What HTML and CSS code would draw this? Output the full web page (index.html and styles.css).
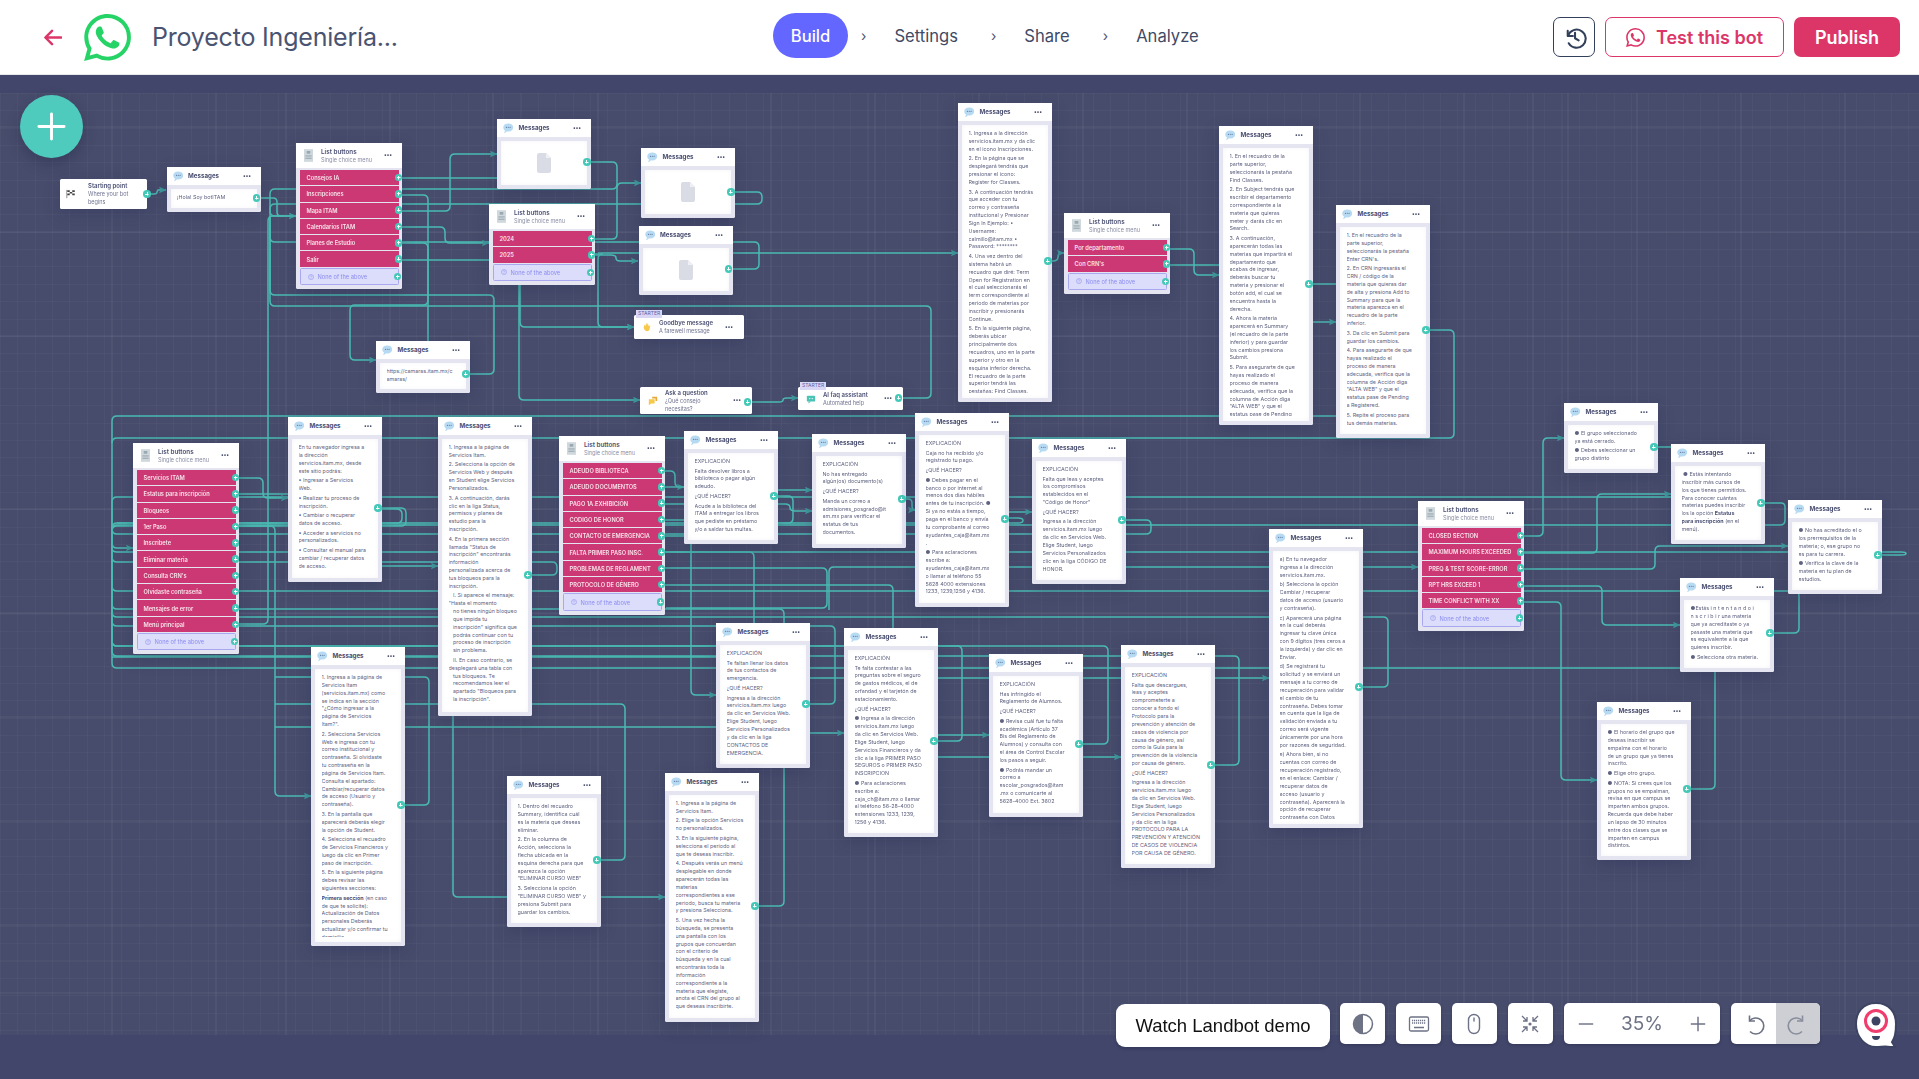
FILE: index.html
```html
<!DOCTYPE html>
<html lang="es">
<head>
<meta charset="utf-8">
<title>Proyecto Ingeniería</title>
<link rel="stylesheet" href="styles.css">
</head>
<body>
<svg class="sprite" width="0" height="0" aria-hidden="true">
  <defs>
    <symbol id="bubble" viewBox="0 0 20 20"><path d="M10 1c5.500 0 9.500 3 9.500 7.500S15.500 16 10.500 16c-1 0-2-.1-3-.4C6 17.500 4 19 2 19c1-1 1.700-3 1.500-5C1.500 12.500.5 10.500.5 8.500.5 4 4.500 1 10 1z" fill="#b7daf3"/><circle cx="6.500" cy="8" r="1" fill="#4a5b86"/><circle cx="10" cy="8" r="1" fill="#4a5b86"/><circle cx="13.500" cy="8" r="1" fill="#4a5b86"/></symbol>
    <symbol id="dots" viewBox="0 0 24 6"><circle cx="4" cy="3" r="2.600" fill="#3e4462"/><circle cx="12" cy="3" r="2.600" fill="#3e4462"/><circle cx="20" cy="3" r="2.600" fill="#3e4462"/></symbol>
    <symbol id="file" viewBox="0 0 14 20"><path d="M2 0h7l5 5v13a2 2 0 0 1-2 2H2a2 2 0 0 1-2-2V2a2 2 0 0 1 2-2z" fill="#d9dce5"/><path d="M9 0l5 5H9z" fill="#eef0f4"/></symbol>
    <symbol id="listdoc" viewBox="0 0 10 14"><rect width="10" height="14" fill="#cfd8dc"/><rect x="3" y="2" width="4" height="3" fill="#9aa9b0"/><rect x="1.500" y="7" width="7" height="1" fill="#8e9da5"/><rect x="1.500" y="9.500" width="7" height="1" fill="#8e9da5"/></symbol>
    <symbol id="help" viewBox="0 0 12 12"><circle cx="6" cy="6" r="5" fill="none" stroke="#8486ee" stroke-width="1"/><path d="M4.500 4.800c0-2 3-2 3 0 0 1.200-1.500 1-1.500 2.400" fill="none" stroke="#8486ee" stroke-width=".9"/><circle cx="6" cy="9" r=".6" fill="#8486ee"/></symbol>
    <symbol id="wa" viewBox="0 0 24 24"><path d="M17.472 14.382c-.297-.149-1.758-.867-2.030-.967-.273-.099-.471-.148-.67.150-.197.297-.767.966-.94 1.164-.173.199-.347.223-.644.075-.297-.150-1.255-.463-2.390-1.475-.883-.788-1.480-1.761-1.653-2.059-.173-.297-.018-.458.130-.606.134-.133.298-.347.446-.520.149-.174.198-.298.298-.497.099-.198.050-.371-.025-.520-.075-.149-.669-1.612-.916-2.207-.242-.579-.487-.500-.669-.510-.173-.008-.371-.010-.570-.010-.198 0-.520.074-.792.372-.272.297-1.040 1.016-1.040 2.479 0 1.462 1.065 2.875 1.213 3.074.149.198 2.096 3.200 5.077 4.487.709.306 1.262.489 1.694.625.712.227 1.360.195 1.871.118.571-.085 1.758-.719 2.006-1.413.248-.694.248-1.289.173-1.413-.074-.124-.272-.198-.570-.347m-5.421 7.403h-.004a9.870 9.870 0 0 1-5.031-1.378l-.361-.214-3.741.982.998-3.648-.235-.374a9.860 9.860 0 0 1-1.510-5.260c.001-5.450 4.436-9.884 9.888-9.884 2.640 0 5.122 1.030 6.988 2.898a9.825 9.825 0 0 1 2.893 6.994c-.003 5.450-4.437 9.884-9.885 9.884m8.413-18.297A11.815 11.815 0 0 0 12.050 0C5.495 0 .16 5.335.157 11.892c0 2.096.547 4.142 1.588 5.945L.057 24l6.305-1.654a11.882 11.882 0 0 0 5.683 1.448h.005c6.554 0 11.890-5.335 11.893-11.893a11.821 11.821 0 0 0-3.480-8.413z"/></symbol>
    <marker id="arrowhead" viewBox="0 0 8 8" refX="7.500" refY="4" markerWidth="5" markerHeight="5" orient="auto"><path d="M0 .5L8 4 0 7.500 1.500 4z" fill="#3f9d9e"/></marker>
  </defs>
</svg>

<div class="app">
  <header class="topbar">
    <div class="brand">
      <svg class="back" viewBox="0 0 20 20"><path d="M19 10H3M9.500 3L2.500 10l7 7" fill="none" stroke="#dc3669" stroke-width="2.600" stroke-linecap="round" stroke-linejoin="round"/></svg>
      <svg class="wa-logo"><use href="#wa"/></svg>
      <h1 class="bot-name">Proyecto Ingeniería...</h1>
    </div>
    <nav class="steps">
      <a class="step current">Build</a>
      <span class="chev first">›</span>
      <a class="step">Settings</a>
      <span class="chev">›</span>
      <a class="step">Share</a>
      <span class="chev">›</span>
      <a class="step">Analyze</a>
    </nav>
    <div class="actions">
      <button class="btn-history"><svg viewBox="0 0 24 24"><path d="M5.500 5.500v5h5" fill="none" stroke="#33405c" stroke-width="2" stroke-linecap="round" stroke-linejoin="round"/><path d="M5.800 10.300A8.700 8.700 0 1 1 6.500 17.500" fill="none" stroke="#33405c" stroke-width="2" stroke-linecap="round"/><path d="M12.500 7.500v5.200l3.500 2" fill="none" stroke="#33405c" stroke-width="2" stroke-linecap="round" stroke-linejoin="round"/></svg></button>
      <button class="btn-test"><svg><use href="#wa"/></svg>Test this bot</button>
      <button class="btn-publish">Publish</button>
    </div>
  </header>

  <main class="canvas">
    <div class="grid"></div>
    <div class="board">
      <svg class="wires" width="1919" height="1079" viewBox="0 0 1919 1079">
        <path class="major" d="M112 93V1035M216 93V1035M286 93V1035M390 93V1035M493 93V1035M598 93V1035M771 93V1035M875 93V1035M979 93V1035M1083 93V1035M1187 93V1035M1360 93V1035M1464 93V1035M1533 93V1035M1568 93V1035M1637 93V1035M1741 93V1035M1845 93V1035M0 127H1919M0 232H1919M0 336H1919M0 509H1919M0 613H1919M0 717H1919M0 821H1919M0 925H1919M0 993H1919"/>
        <path class="wire arrow" d="M147 194H154Q157 194 157 192L158 190H166"/>
        <path class="wire arrow" d="M256 198H273Q277 198 277 202V212Q277 216 281 216H296"/>
        <path class="wire arrow" d="M591 162H612Q617 162 617 167V184Q617 189 612 189H275Q270 189 270 194V211Q270 216 275 216H296"/>
        <path class="wire" d="M731 192H757Q762 192 762 197V199Q762 204 757 204H275Q270 204 270 209V216"/>
        <path class="wire" d="M731 269H754Q759 269 759 264V247Q759 242 754 242H275Q270 242 270 237V216"/>
        <path class="wire" d="M903 398H926Q931 398 931 393V311Q931 306 926 306H275Q270 306 270 301V216"/>
        <path class="wire" d="M466 374H489Q494 374 494 369V300Q494 295 489 295H275Q270 295 270 290V216"/>
        <path class="wire" d="M235 624H263Q268 624 268 619V221Q268 216 273 216H296"/>
        <path class="wire arrow" d="M235 526H270Q275 526 275 531V791Q275 796 280 796H311"/>
        <path class="wire arrow" d="M398 195H423Q428 195 428 200V300Q428 305 423 305H355Q350 305 350 310V355Q350 360 355 360H376"/>
        <path class="wire" d="M398 243H423Q428 243 428 248V345"/>
        <path class="wire" d="M398 178H497"/>
        <path class="wire arrow" d="M398 211H445Q450 211 450 206V159Q450 154 455 154H497"/>
        <path class="wire arrow" d="M398 227H440Q445 227 445 232V238Q445 243 450 243H489"/>
        <path class="wire" d="M398 260H489"/>
        <path class="wire arrow" d="M590 239H612Q617 239 617 234V188Q617 183 622 183H641"/>
        <path class="wire arrow" d="M590 255H611Q616 255 616 258Q616 261 620 261H638"/>
        <path class="wire arrow" d="M590 254H603Q598 254 598 259V322Q598 327 603 327H634"/>
        <path class="wire arrow" d="M520 284V322Q520 327 525 327H634"/>
        <path class="wire arrow" d="M519 284V395Q519 400 524 400H640"/>
        <path class="wire arrow" d="M598 253H958"/>
        <path class="wire arrow" d="M1047 261H1053Q1058 261 1058 257L1059 253H1064"/>
        <path class="wire arrow" d="M1165 249H1189Q1194 249 1194 254V270Q1194 275 1199 275H1219"/>
        <path class="wire" d="M1165 265H1219"/>
        <path class="wire" d="M1308 284H1336"/>
        <path class="wire arrow" d="M1313 322H1336"/>
        <path class="wire arrow" d="M1429 330H1449Q1454 330 1454 335V433Q1454 438 1449 438H117Q112 438 112 443V543Q112 548 117 548H133"/>
        <path class="wire" d="M1336 416H117Q112 416 112 421V443"/>
        <path class="wire arrow" d="M748 402H779Q783 402 783 400Q783 398 787 398H798"/>
        <path class="wire" d="M1653 447H1675Q1680 447 1680 452V492Q1680 497 1675 497H117Q112 497 112 502V548"/>
        <path class="wire" d="M1760 503H1781Q1785 503 1785 507V520Q1785 525 1780 525H117Q112 525 112 530V548"/>
        <path class="wire" d="M1876 555H1901Q1906 555 1906 553.500Q1906 552 1901 552H117Q112 552 112 548"/>
        <path class="wire" d="M1769 633H1794Q1799 633 1799 628V596Q1799 591 1794 591H117Q112 591 112 586V548"/>
        <path class="wire" d="M1686 789H1710Q1715 789 1715 784V673Q1715 668 1710 668H117Q112 668 112 663V548"/>
        <path class="wire" d="M1358 687H1383Q1388 687 1388 682V622Q1388 617 1383 617H117Q112 617 112 612V548"/>
        <path class="wire" d="M1210 765H1234Q1239 765 1239 760V661Q1239 656 1234 656H117Q112 656 112 651V548"/>
        <path class="wire" d="M1078 744H1103Q1108 744 1108 739V651Q1108 646 1103 646H117Q112 646 112 641V548"/>
        <path class="wire" d="M932 741H957Q962 741 962 736V651Q962 646 957 646H117Q112 646 112 641V548"/>
        <path class="wire" d="M1121 520H1146Q1151 520 1151 525V529Q1151 534 1146 534H117Q112 534 112 529V548"/>
        <path class="wire" d="M804 704H830Q835 704 835 699V631Q835 626 830 626H117Q112 626 112 621V548"/>
        <path class="wire" d="M595 860H620Q625 860 625 855V709Q625 704 620 704H275"/>
        <path class="wire" d="M400 805H424Q429 805 429 800V682Q429 677 424 677H275"/>
        <path class="wire" d="M528 575H552Q557 575 557 570V567Q557 562 552 562H117Q112 562 112 557V548"/>
        <path class="wire" d="M377 508H401Q406 508 406 513V521Q406 526 401 526H117Q112 526 112 531V548"/>
        <path class="wire" d="M377 509H396Q402 509 402 514V518Q402 523 397 523H117Q112 523 112 528V548"/>
        <path class="wire" d="M755 906H779Q784 906 784 901V614Q784 609 779 609H117Q112 609 112 604V548"/>
        <path class="wire" d="M1005 518H1018Q1023 518 1023 520.500Q1023 523 1018 523H117"/>
        <path class="wire arrow" d="M901 499H908Q912 499 912 503V506Q912 510 915 510"/>
        <path class="wire arrow" d="M1009 512H1032"/>
        <path class="wire" d="M773 496H788Q793 496 793 501V518Q793 523 788 523H778"/>
        <path class="wire arrow" d="M661 504H785Q790 504 790 507.500Q790 511 795 511H812"/>
        <path class="wire arrow" d="M661 471H670Q675 471 675 476V482Q675 487 680 487H684"/>
        <path class="wire arrow" d="M661 487H686Q691 487 691 492V690Q691 695 696 695H716"/>
        <path class="wire arrow" d="M778 490H812"/>
        <path class="wire" d="M661 520H684"/>
        <path class="wire" d="M661 536H684"/>
        <path class="wire arrow" d="M661 552H749Q754 552 754 557V728Q754 733 759 733H844"/>
        <path class="wire" d="M661 568H822Q827 568 827 573V603Q827 608 822 608H666"/>
        <path class="wire arrow" d="M829 610V572Q829 567 834 567H1418"/>
        <path class="wire arrow" d="M661 585H888Q893 585 893 590V730Q893 735 898 735H989"/>
        <path class="wire arrow" d="M937 757H1121"/>
        <path class="wire arrow" d="M809 678H1269"/>
        <path class="wire arrow" d="M382 566H438"/>
        <path class="wire" d="M235 494H288"/>
        <path class="wire arrow" d="M235 478H258Q263 478 263 483V493Q263 498 268 498H288"/>
        <path class="wire arrow" d="M1520 536H1538Q1543 536 1543 531V443Q1543 438 1548 438H1564"/>
        <path class="wire arrow" d="M1520 553H1592Q1597 553 1597 548V499Q1597 494 1602 494H1671"/>
        <path class="wire arrow" d="M1520 569H1650Q1655 569 1655 564V551Q1655 546 1660 546H1788"/>
        <path class="wire arrow" d="M1520 586H1597Q1602 586 1602 591V620Q1602 625 1607 625H1680"/>
        <path class="wire arrow" d="M1520 602H1556Q1561 602 1561 607V775Q1561 780 1566 780H1597"/>
        <path class="wire arrow" d="M453 716V892Q453 897 458 897H665"/>
        <path class="wire" d="M112 657H716"/>
        <path class="wire" d="M275 727H716"/>
      </svg>

      <article class="node start" style="left:60px;top:179px;width:87px;height:30px">
        <svg class="flag" viewBox="0 0 12 12"><path d="M1 1v10" stroke="#555" stroke-width=".8"/><path d="M1.500 1.500h9v6h-9z" fill="#fff"/><path d="M1.500 1.500h3v2h-3zM7.500 1.500h3v2h-3zM4.500 3.500h3v2h-3zM1.500 5.500h3v2h-3zM7.500 5.500h3v2h-3z" fill="#444"/></svg>
        <div class="start-text"><b>Starting point</b><span>Where your bot<br>begins</span></div>
        <i class="port out-edge" style="top:15px"></i>
      </article>

      <article class="node msg" style="left:166.500px;top:167px;width:94px;height:45px">
        <header class="head"><svg class="bubble"><use href="#bubble"/></svg><b>Messages</b><svg class="dots"><use href="#dots"/></svg></header>
        <div class="body"><div class="text"><p>¡Hola! Soy botITAM</p></div></div>
        <i class="port" style="top:31px"></i>
      </article>

      <article class="node list" style="left:296px;top:143px;width:106px">
        <header class="list-head"><svg class="doc"><use href="#listdoc"/></svg><div class="list-title"><b>List buttons</b><span>Single choice menu</span></div><svg class="dots"><use href="#dots"/></svg></header>
        <div class="rows">
          <div class="row">Consejos IA<i class="port"></i></div>
          <div class="row">Inscripciones<i class="port"></i></div>
          <div class="row">Mapa ITAM<i class="port"></i></div>
          <div class="row">Calendarios ITAM<i class="port"></i></div>
          <div class="row">Planes de Estudio<i class="port"></i></div>
          <div class="row">Salir<i class="port"></i></div>
          <div class="row none"><svg class="help"><use href="#help"/></svg>None of the above<i class="port"></i></div>
        </div>
      </article>

      <article class="node msg" style="left:497px;top:119px;width:94px;height:70px">
        <header class="head"><svg class="bubble"><use href="#bubble"/></svg><b>Messages</b><svg class="dots"><use href="#dots"/></svg></header>
        <div class="body media"><svg class="file"><use href="#file"/></svg></div>
        <i class="port" style="top:43px"></i>
      </article>

      <article class="node list" style="left:489px;top:204px;width:106px">
        <header class="list-head"><svg class="doc"><use href="#listdoc"/></svg><div class="list-title"><b>List buttons</b><span>Single choice menu</span></div><svg class="dots"><use href="#dots"/></svg></header>
        <div class="rows">
          <div class="row">2024<i class="port"></i></div>
          <div class="row">2025<i class="port"></i></div>
          <div class="row none"><svg class="help"><use href="#help"/></svg>None of the above<i class="port"></i></div>
        </div>
      </article>

      <article class="node msg" style="left:641px;top:148px;width:94px;height:70px">
        <header class="head"><svg class="bubble"><use href="#bubble"/></svg><b>Messages</b><svg class="dots"><use href="#dots"/></svg></header>
        <div class="body media"><svg class="file"><use href="#file"/></svg></div>
        <i class="port" style="top:44px"></i>
      </article>

      <article class="node msg" style="left:638.500px;top:226px;width:94px;height:69px">
        <header class="head"><svg class="bubble"><use href="#bubble"/></svg><b>Messages</b><svg class="dots"><use href="#dots"/></svg></header>
        <div class="body media"><svg class="file"><use href="#file"/></svg></div>
        <i class="port" style="top:43px"></i>
      </article>

      <article class="node starter" style="left:634px;top:315px;width:110px;height:24px">
        <span class="starter-tag">STARTER</span>
        <svg class="emoji" viewBox="0 0 12 12"><path d="M2 7l1-4 1 2 1-4 1 3 1-3 1 4 2-1-1 5c-1 3-6 3-7-2z" fill="#f7c84a"/></svg>
        <div class="start-text"><b>Goodbye message</b><span>A farewell message</span></div>
        <svg class="dots"><use href="#dots"/></svg>
      </article>

      <article class="node starter plain" style="left:640px;top:387px;width:112px;height:27px">
        <svg class="emoji" viewBox="0 0 12 12"><path d="M1 4h7v5H4l-3 2z" fill="#f7c84a"/><path d="M5 1h6v5H9V3H5z" fill="#e8a93a"/></svg>
        <div class="start-text"><b>Ask a question</b><span>¿Qué consejo<br>necesitas?</span></div>
        <svg class="dots"><use href="#dots"/></svg>
        <i class="port" style="top:15px"></i>
      </article>

      <article class="node starter" style="left:798px;top:387px;width:105px;height:23px">
        <span class="starter-tag">STARTER</span>
        <svg class="emoji" viewBox="0 0 12 12"><rect x="1" y="2" width="10" height="7" rx="1" fill="#4cc3b4"/><path d="M3 9l0 2.500L6 9z" fill="#4cc3b4"/><circle cx="4.500" cy="5.500" r=".8" fill="#fff"/><circle cx="7.500" cy="5.500" r=".8" fill="#fff"/></svg>
        <div class="start-text"><b>AI faq assistant</b><span>Automated help</span></div>
        <svg class="dots"><use href="#dots"/></svg>
        <i class="port" style="top:11px"></i>
      </article>

      <article class="node msg" style="left:958px;top:103px;width:94px;height:299px">
        <header class="head"><svg class="bubble"><use href="#bubble"/></svg><b>Messages</b><svg class="dots"><use href="#dots"/></svg></header>
        <div class="body"><div class="text">
          <p>1. Ingresa a la dirección<br>servicios.itam.mx y da clic<br>en el icono Inscripciones.</p>
          <p>2. En la página que se<br>desplegará tendrás que<br>presionar el icono:<br>Register for Classes.</p>
          <p>3. A continuación tendrás<br>que acceder con tu<br>correo y contraseña<br>institucional y Presionar<br>Sign In Ejemplo: •<br>Username:<br>calmillo@itam.mx •<br>Password: ********</p>
          <p>4. Una vez dentro del<br>sistema habrá un<br>recuadro que diré: Term<br>Open for Registration en<br>el cual seleccionarás el<br>term correspondiente al<br>periodo de materias por<br>inscribir y presionarás<br>Continue.</p>
          <p>5. En la siguiente página,<br>deberás ubicar<br>principalmente dos<br>recuadros, uno en la parte<br>superior y otro en la<br>esquina inferior derecha.<br>El recuadro de la parte<br>superior tendrá las<br>pestañas: Find Classes,</p>
        </div></div>
        <i class="port" style="top:158px"></i>
      </article>

      <article class="node list" style="left:1064px;top:213px;width:106px">
        <header class="list-head"><svg class="doc"><use href="#listdoc"/></svg><div class="list-title"><b>List buttons</b><span>Single choice menu</span></div><svg class="dots"><use href="#dots"/></svg></header>
        <div class="rows">
          <div class="row">Por departamento<i class="port"></i></div>
          <div class="row">Con CRN's<i class="port"></i></div>
          <div class="row none"><svg class="help"><use href="#help"/></svg>None of the above<i class="port"></i></div>
        </div>
      </article>

      <article class="node msg" style="left:1219px;top:126px;width:94px;height:299px">
        <header class="head"><svg class="bubble"><use href="#bubble"/></svg><b>Messages</b><svg class="dots"><use href="#dots"/></svg></header>
        <div class="body"><div class="text">
          <p>1. En el recuadro de la<br>parte superior,<br>seleccionarás la pestaña<br>Find Classes.</p>
          <p>2. En Subject tendrás que<br>escribir el departamento<br>correspondiente a la<br>materia que quieras<br>meter y darás clic en<br>Search.</p>
          <p>3. A continuación,<br>aparecerán todas las<br>materias que impartirá el<br>departamento que<br>acabas de ingresar,<br>deberás buscar tu<br>materia y presionar el<br>botón add, el cual se<br>encuentra hasta la<br>derecha.</p>
          <p>4. Ahora la materia<br>aparecerá en Summary<br>(el recuadro de la parte<br>inferior) y para guardar<br>los cambios presiona<br>Submit.</p>
          <p>5. Para asegurarte de que<br>hayas realizado el<br>proceso de manera<br>adecuada, verifica que la<br>columna de Acción diga<br>"ALTA WEB" y que el<br>estatus pase de Pending</p>
        </div></div>
        <i class="port" style="top:158px"></i>
      </article>

      <article class="node msg" style="left:1336px;top:205px;width:94px;height:233px">
        <header class="head"><svg class="bubble"><use href="#bubble"/></svg><b>Messages</b><svg class="dots"><use href="#dots"/></svg></header>
        <div class="body"><div class="text">
          <p>1. En el recuadro de la<br>parte superior,<br>seleccionarás la pestaña<br>Enter CRN's.</p>
          <p>2. En CRN ingresarás el<br>CRN / código de la<br>materia que quieras dar<br>de alta y presiona Add to<br>Summary para que la<br>materia aparezca en el<br>recuadro de la parte<br>inferior.</p>
          <p>3. Da clic en Submit para<br>guardar los cambios.</p>
          <p>4. Para asegurarte de que<br>hayas realizado el<br>proceso de manera<br>adecuada, verifica que la<br>columna de Acción diga<br>"ALTA WEB" y que el<br>estatus pase de Pending<br>a Registered.</p>
          <p>5. Repite el proceso para<br>tus demás materias.</p>
        </div></div>
        <i class="port" style="top:125px"></i>
      </article>

      <article class="node msg" style="left:376px;top:341px;width:94px;height:52px">
        <header class="head"><svg class="bubble"><use href="#bubble"/></svg><b>Messages</b><svg class="dots"><use href="#dots"/></svg></header>
        <div class="body"><div class="text"><p>https://camaras.itam.mx/c<br>amaras/</p></div></div>
        <i class="port" style="top:33px"></i>
      </article>

      <article class="node list" style="left:133px;top:443px;width:106px">
        <header class="list-head"><svg class="doc"><use href="#listdoc"/></svg><div class="list-title"><b>List buttons</b><span>Single choice menu</span></div><svg class="dots"><use href="#dots"/></svg></header>
        <div class="rows">
          <div class="row">Servicios ITAM<i class="port"></i></div>
          <div class="row">Estatus para inscripción<i class="port"></i></div>
          <div class="row">Bloqueos<i class="port"></i></div>
          <div class="row">1er Paso<i class="port"></i></div>
          <div class="row">Inscríbete<i class="port"></i></div>
          <div class="row">Eliminar materia<i class="port"></i></div>
          <div class="row">Consulta CRN's<i class="port"></i></div>
          <div class="row">Olvidaste contraseña<i class="port"></i></div>
          <div class="row">Mensajes de error<i class="port"></i></div>
          <div class="row">Menú principal<i class="port"></i></div>
          <div class="row none"><svg class="help"><use href="#help"/></svg>None of the above<i class="port"></i></div>
        </div>
      </article>

      <article class="node msg" style="left:288px;top:417px;width:94px;height:165px">
        <header class="head"><svg class="bubble"><use href="#bubble"/></svg><b>Messages</b><svg class="dots"><use href="#dots"/></svg></header>
        <div class="body"><div class="text">
          <p>En tu navegador ingresa a<br>la dirección<br>servicios.itam.mx, desde<br>este sitio podrás:</p>
          <p>• Ingresar a Servicios<br>Web.</p>
          <p>• Realizar tu proceso de<br>inscripción.</p>
          <p>• Cambiar o recuperar<br>datos de acceso.</p>
          <p>• Acceder a servicios no<br>personalizados.</p>
          <p>• Consultar el manual para<br>cambiar / recuperar datos<br>de acceso.</p>
        </div></div>
        <i class="port" style="top:91px"></i>
      </article>

      <article class="node msg" style="left:438px;top:417px;width:94px;height:299px">
        <header class="head"><svg class="bubble"><use href="#bubble"/></svg><b>Messages</b><svg class="dots"><use href="#dots"/></svg></header>
        <div class="body"><div class="text">
          <p>1. Ingresa a la página de<br>Servicios Itam.</p>
          <p>2. Selecciona la opción de<br>Servicios Web y después<br>en Student elige Servicios<br>Personalizados.</p>
          <p>3. A continuación, darás<br>clic en la liga Status,<br>permisos y planes de<br>estudio para la<br>inscripción.</p>
          <p>4. En la primera sección<br>llamada "Status de<br>inscripción" encontrarás<br>información<br>personalizada acerca de<br>tus bloqueos para la<br>inscripción.</p>
          <p class="indent">I. Si aparece el mensaje:<br><span class="out">"Hasta el momento<br>no tienes ningún bloqueo<br>que impida tu<br>inscripción" significa que<br>podrás continuar con tu<br>proceso de inscripción<br>sin problema.</span></p>
          <p class="indent">II. En caso contrario, se<br><span class="out">desplegará una tabla con<br>tus bloqueos. Te<br>recomendamos leer el<br>apartado "Bloqueos para<br>la inscripción".</span></p>
        </div></div>
        <i class="port" style="top:158px"></i>
      </article>

      <article class="node msg" style="left:311px;top:647px;width:94px;height:299px">
        <header class="head"><svg class="bubble"><use href="#bubble"/></svg><b>Messages</b><svg class="dots"><use href="#dots"/></svg></header>
        <div class="body"><div class="text">
          <p>1. Ingresa a la página de<br>Servicios Itam<br>(servicios.itam.mx) como<br>se indica en la sección<br>"¿Cómo ingresar a la<br>página de Servicios<br>Itam?".</p>
          <p>2. Selecciona Servicios<br>Web e ingresa con tu<br>correo institucional y<br>contraseña. Si olvidaste<br>tu contraseña en la<br>página de Servicios Itam.<br>Consulta el apartado:<br>Cambiar/recuperar datos<br>de acceso (Usuario y<br>contraseña).</p>
          <p>3. En la pantalla que<br>aparecerá deberás elegir<br>la opción de Student.</p>
          <p>4. Selecciona el recuadro<br>de Servicios Financieros y<br>luego da clic en Primer<br>paso de inscripción.</p>
          <p>5. En la siguiente página<br>debes revisar las<br>siguientes secciones:</p>
          <p><b>Primera sección</b> (en caso<br>de que te solicite):<br>Actualización de Datos<br>personales Deberás<br>actualizar y/o confirmar tu<br>domicilio.</p>
        </div></div>
        <i class="port" style="top:158px"></i>
      </article>

      <article class="node list" style="left:559px;top:436px;width:106px">
        <header class="list-head"><svg class="doc"><use href="#listdoc"/></svg><div class="list-title"><b>List buttons</b><span>Single choice menu</span></div><svg class="dots"><use href="#dots"/></svg></header>
        <div class="rows">
          <div class="row">ADEUDO BIBLIOTECA<i class="port"></i></div>
          <div class="row">ADEUDO DOCUMENTOS<i class="port"></i></div>
          <div class="row">PAGO 1A.EXHIBICIÓN<i class="port"></i></div>
          <div class="row">CODIGO DE HONOR<i class="port"></i></div>
          <div class="row">CONTACTO DE EMERGENCIA<i class="port"></i></div>
          <div class="row">FALTA PRIMER PASO INSC.<i class="port"></i></div>
          <div class="row">PROBLEMAS DE REGLAMENT<i class="port"></i></div>
          <div class="row">PROTOCOLO DE GÉNERO<i class="port"></i></div>
          <div class="row none"><svg class="help"><use href="#help"/></svg>None of the above<i class="port"></i></div>
        </div>
      </article>

      <article class="node msg" style="left:684px;top:431px;width:94px;height:113px">
        <header class="head"><svg class="bubble"><use href="#bubble"/></svg><b>Messages</b><svg class="dots"><use href="#dots"/></svg></header>
        <div class="body"><div class="text">
          <p>EXPLICACIÓN</p>
          <p>Falta devolver libros a<br>biblioteca o pagar algún<br>adeudo.</p>
          <p>¿QUÉ HACER?</p>
          <p>Acude a la biblioteca del<br>ITAM a entregar los libros<br>que pediste en préstamo<br>y/o a saldar tus multas.</p>
        </div></div>
        <i class="port" style="top:65px"></i>
      </article>

      <article class="node msg" style="left:812px;top:434px;width:94px;height:114px">
        <header class="head"><svg class="bubble"><use href="#bubble"/></svg><b>Messages</b><svg class="dots"><use href="#dots"/></svg></header>
        <div class="body"><div class="text">
          <p>EXPLICACIÓN</p>
          <p>No has entregado<br>algún(os) documento(s)</p>
          <p>¿QUÉ HACER?</p>
          <p>Manda un correo a<br>admisiones_posgrado@it<br>am.mx para verificar el<br>estatus de tus<br>documentos.</p>
        </div></div>
        <i class="port" style="top:65px"></i>
      </article>

      <article class="node msg" style="left:915px;top:413px;width:94px;height:194px">
        <header class="head"><svg class="bubble"><use href="#bubble"/></svg><b>Messages</b><svg class="dots"><use href="#dots"/></svg></header>
        <div class="body"><div class="text">
          <p>EXPLICACIÓN</p>
          <p>Caja no ha recibido y/o<br>registrado tu pago.</p>
          <p>¿QUÉ HACER?</p>
          <p>● Debes pagar en el<br>banco o por internet al<br>menos dos días hábiles<br>antes de tu inscripción. ●<br>Si ya no estás a tiempo,<br>paga en el banco y envía<br>tu comprobante al correo<br>ayudantes_caja@itam.mx<br>.</p>
          <p>● Para aclaraciones<br>escribe a:<br>ayudantes_caja@itam.mx<br>o llamar al teléfono 55<br>5628 4000 extensiones<br>1233, 1239,1256 y 4136.</p>
        </div></div>
        <i class="port" style="top:106px"></i>
      </article>

      <article class="node msg" style="left:716px;top:623px;width:94px;height:145px">
        <header class="head"><svg class="bubble"><use href="#bubble"/></svg><b>Messages</b><svg class="dots"><use href="#dots"/></svg></header>
        <div class="body"><div class="text">
          <p>EXPLICACIÓN</p>
          <p>Te faltan llenar los datos<br>de tus contactos de<br>emergencia.</p>
          <p>¿QUÉ HACER?</p>
          <p>Ingresa a la dirección<br>servicios.itam.mx luego<br>da clic en Servicios Web.<br>Elige Student, luego<br>Servicios Personalizados<br>y da clic en la liga<br>CONTACTOS DE<br>EMERGENCIA.</p>
        </div></div>
        <i class="port" style="top:81px"></i>
      </article>

      <article class="node msg" style="left:844px;top:628px;width:94px;height:209px">
        <header class="head"><svg class="bubble"><use href="#bubble"/></svg><b>Messages</b><svg class="dots"><use href="#dots"/></svg></header>
        <div class="body"><div class="text">
          <p>EXPLICACIÓN</p>
          <p>Te falta contestar a las<br>preguntas sobre el seguro<br>de gastos médicos, el de<br>orfandad y el tarjetón de<br>estacionamiento.</p>
          <p>¿QUÉ HACER?</p>
          <p>● Ingresa a la dirección<br>servicios.itam.mx luego<br>da clic en Servicios Web.<br>Elige Student, luego<br>Servicios Financieros y da<br>clic a la liga PRIMER PASO<br>SEGUROS o PRIMER PASO<br>INSCRIPCION</p>
          <p>● Para aclaraciones<br>escribe a:<br>caja_ch@itam.mx o llamar<br>al teléfono 56-28-4000<br>extensiones 1233, 1239,<br>1256 y 4136.</p>
        </div></div>
        <i class="port" style="top:113px"></i>
      </article>

      <article class="node msg" style="left:507px;top:776px;width:94px;height:151px">
        <header class="head"><svg class="bubble"><use href="#bubble"/></svg><b>Messages</b><svg class="dots"><use href="#dots"/></svg></header>
        <div class="body"><div class="text">
          <p>1. Dentro del recuadro<br>Summary, identifica cuál<br>es la materia que deseas<br>eliminar.</p>
          <p>2. En la columna de<br>Acción, selecciona la<br>flecha ubicada en la<br>esquina derecha para que<br>aparezca la opción<br>"ELIMINAR CURSO WEB"</p>
          <p>3. Selecciona la opción<br>"ELIMINAR CURSO WEB" y<br>presiona Submit para<br>guardar los cambios.</p>
        </div></div>
        <i class="port" style="top:84px"></i>
      </article>

      <article class="node msg" style="left:665px;top:773px;width:94px;height:249px">
        <header class="head"><svg class="bubble"><use href="#bubble"/></svg><b>Messages</b><svg class="dots"><use href="#dots"/></svg></header>
        <div class="body"><div class="text">
          <p>1. Ingresa a la página de<br>Servicios Itam.</p>
          <p>2. Elige la opción Servicios<br>no personalizados.</p>
          <p>3. En la siguiente página,<br>selecciona el periodo al<br>que te deseas inscribir.</p>
          <p>4. Después verás un menú<br>desplegable en donde<br>aparecerán todas las<br>materias<br>correspondientes a ese<br>periodo, busca tu materia<br>y presiona Selecciona.</p>
          <p>5. Una vez hecha la<br>búsqueda, se presenta<br>una pantalla con los<br>grupos que concuerdan<br>con el criterio de<br>búsqueda y en la cual<br>encontrarás toda la<br>información<br>correspondiente a la<br>materia que elegiste,<br>anota el CRN del grupo al<br>que deseas inscribirte.</p>
        </div></div>
        <i class="port" style="top:133px"></i>
      </article>

      <article class="node msg" style="left:1032px;top:439px;width:94px;height:145px">
        <header class="head"><svg class="bubble"><use href="#bubble"/></svg><b>Messages</b><svg class="dots"><use href="#dots"/></svg></header>
        <div class="body"><div class="text">
          <p>EXPLICACIÓN</p>
          <p>Falta que leas y aceptes<br>los compromisos<br>establecidos en el<br>"Código de Honor"</p>
          <p>¿QUÉ HACER?</p>
          <p>Ingresa a la dirección<br>servicios.itam.mx luego<br>da clic en Servicios Web.<br>Elige Student, luego<br>Servicios Personalizados<br>clic en la liga CÓDIGO DE<br>HONOR.</p>
        </div></div>
        <i class="port" style="top:81px"></i>
      </article>

      <article class="node msg" style="left:1269px;top:529px;width:94px;height:299px">
        <header class="head"><svg class="bubble"><use href="#bubble"/></svg><b>Messages</b><svg class="dots"><use href="#dots"/></svg></header>
        <div class="body"><div class="text">
          <p>a) En tu navegador<br>ingresa a la dirección<br>servicios.itam.mx.</p>
          <p>b) Selecciona la opción<br>Cambiar / recuperar<br>datos de acceso (usuario<br>y contraseña).</p>
          <p>c) Aparecerá una página<br>en la cual deberás<br>ingresar tu clave única<br>con 9 dígitos (tres ceros a<br>la izquierda) y dar clic en<br>Enviar.</p>
          <p>d) Se registrará tu<br>solicitud y se enviará un<br>mensaje a tu correo de<br>recuperación para validar<br>el cambio de tu<br>contraseña. Debes tomar<br>en cuenta que la liga de<br>validación enviada a tu<br>correo será vigente<br>únicamente por una hora<br>por razones de seguridad.</p>
          <p>e) Ahora bien, si no<br>cuentas con correo de<br>recuperación registrado,<br>en el enlace: Cambiar /<br>recuperar datos de<br>acceso (usuario y<br>contraseña). Aparecerá la<br>opción de recuperar<br>contraseña con Datos</p>
        </div></div>
        <i class="port" style="top:158px"></i>
      </article>

      <article class="node msg" style="left:989px;top:654px;width:94px;height:163px">
        <header class="head"><svg class="bubble"><use href="#bubble"/></svg><b>Messages</b><svg class="dots"><use href="#dots"/></svg></header>
        <div class="body"><div class="text">
          <p>EXPLICACIÓN</p>
          <p>Has infringido el<br>Reglamento de Alumnos.</p>
          <p>¿QUÉ HACER?</p>
          <p>● Revisa cuál fue tu falta<br>académica (Artículo 37<br>Bis del Reglamento de<br>Alumnos) y consulta con<br>el área de Control Escolar<br>los pasos a seguir.</p>
          <p>● Podrás mandar un<br>correo a<br>escolar_posgrados@itam<br>.mx o comunicarte al<br>5628-4000 Ext. 3602</p>
        </div></div>
        <i class="port" style="top:90px"></i>
      </article>

      <article class="node msg" style="left:1121px;top:645px;width:94px;height:223px">
        <header class="head"><svg class="bubble"><use href="#bubble"/></svg><b>Messages</b><svg class="dots"><use href="#dots"/></svg></header>
        <div class="body"><div class="text">
          <p>EXPLICACIÓN</p>
          <p>Falta que descargues,<br>leas y aceptes<br>comprometerte a<br>conocer a fondo el<br>Protocolo para la<br>prevención y atención de<br>casos de violencia por<br>causa de género, así<br>como la Guía para la<br>prevención de la violencia<br>por causa de género.</p>
          <p>¿QUÉ HACER?</p>
          <p>Ingresa a la dirección<br>servicios.itam.mx luego<br>da clic en Servicios Web.<br>Elige Student, luego<br>Servicios Personalizados<br>y da clic en la liga<br>PROTOCOLO PARA LA<br>PREVENCIÓN Y ATENCIÓN<br>DE CASOS DE VIOLENCIA<br>POR CAUSA DE GÉNERO.</p>
        </div></div>
        <i class="port" style="top:120px"></i>
      </article>

      <article class="node list" style="left:1418px;top:501px;width:106px">
        <header class="list-head"><svg class="doc"><use href="#listdoc"/></svg><div class="list-title"><b>List buttons</b><span>Single choice menu</span></div><svg class="dots"><use href="#dots"/></svg></header>
        <div class="rows">
          <div class="row">CLOSED SECTION<i class="port"></i></div>
          <div class="row">MAXIMUM HOURS EXCEEDED<i class="port"></i></div>
          <div class="row">PREQ &amp; TEST SCORE-ERROR<i class="port"></i></div>
          <div class="row">RPT HRS EXCEED 1<i class="port"></i></div>
          <div class="row">TIME CONFLICT WITH XX<i class="port"></i></div>
          <div class="row none"><svg class="help"><use href="#help"/></svg>None of the above<i class="port"></i></div>
        </div>
      </article>

      <article class="node msg" style="left:1564px;top:403px;width:94px;height:70px">
        <header class="head"><svg class="bubble"><use href="#bubble"/></svg><b>Messages</b><svg class="dots"><use href="#dots"/></svg></header>
        <div class="body"><div class="text">
          <p>● El grupo seleccionado<br>ya está cerrado.</p>
          <p>● Debes seleccionar un<br>grupo distinto</p>
        </div></div>
        <i class="port" style="top:44px"></i>
      </article>

      <article class="node msg" style="left:1671px;top:444px;width:94px;height:100px">
        <header class="head"><svg class="bubble"><use href="#bubble"/></svg><b>Messages</b><svg class="dots"><use href="#dots"/></svg></header>
        <div class="body"><div class="text">
          <p>&nbsp;● Estás intentando<br>inscribir más cursos de<br>los que tienes permitidos.<br>Para conocer cuántas<br>materias puedes inscribir<br>los la opción <b>Estatus<br>para inscripción</b> (en el<br>menú).</p>
        </div></div>
        <i class="port" style="top:59px"></i>
      </article>

      <article class="node msg" style="left:1788px;top:500px;width:94px;height:94px">
        <header class="head"><svg class="bubble"><use href="#bubble"/></svg><b>Messages</b><svg class="dots"><use href="#dots"/></svg></header>
        <div class="body"><div class="text">
          <p>● No has acreditado el o<br>los prerrequisitos de la<br>materia; o, ese grupo no<br>es para tu carrera.</p>
          <p>● Verifica la clave de la<br>materia en tu plan de<br>estudios.</p>
        </div></div>
        <i class="port" style="top:55px"></i>
      </article>

      <article class="node msg" style="left:1680px;top:578px;width:94px;height:94px">
        <header class="head"><svg class="bubble"><use href="#bubble"/></svg><b>Messages</b><svg class="dots"><use href="#dots"/></svg></header>
        <div class="body"><div class="text">
          <p>●Estás i n t e n t a n d o i<br>n s c r i b i r una materia<br>que ya acreditaste o ya<br>pasaste una materia que<br>es equivalente a la que<br>quieres inscribir.</p>
          <p>● Selecciona otra materia.</p>
        </div></div>
        <i class="port" style="top:55px"></i>
      </article>

      <article class="node msg" style="left:1597px;top:702px;width:94px;height:158px">
        <header class="head"><svg class="bubble"><use href="#bubble"/></svg><b>Messages</b><svg class="dots"><use href="#dots"/></svg></header>
        <div class="body"><div class="text">
          <p>● El horario del grupo que<br>deseas inscribir se<br>empalma con el horario<br>de un grupo que ya tienes<br>inscrito.</p>
          <p>● Elige otro grupo.</p>
          <p>● NOTA: Si crees que los<br>grupos no se empalman,<br>revisa en que campus se<br>imparten ambos grupos.<br>Recuerda que debe haber<br>un lapso de 30 minutos<br>entre dos clases que se<br>imparten en campus<br>distintos.</p>
        </div></div>
        <i class="port" style="top:87px"></i>
      </article>
    </div>

    <button class="fab" aria-label="Add"><svg viewBox="0 0 32 32"><path d="M16 3v26M3 16h26" stroke="#fff" stroke-width="3" stroke-linecap="round"/></svg></button>

    <div class="toolbar">
      <button class="demo">Watch Landbot demo</button>
      <button class="tool"><svg viewBox="0 0 24 24"><circle cx="12" cy="12" r="9.500" fill="none" stroke="#6d7285" stroke-width="1.500"/><path d="M12 2.500a9.500 9.500 0 0 0 0 19z" fill="#6d7285"/></svg></button>
      <button class="tool"><svg viewBox="0 0 24 24"><rect x="2.500" y="5" width="19" height="14" rx="1.500" fill="none" stroke="#6d7285" stroke-width="1.300"/><path d="M5 8.500h14M5 11h14" stroke="#6d7285" stroke-width="1.400" stroke-dasharray="1.200 .8"/><path d="M7 15.500h10" stroke="#6d7285" stroke-width="1.500"/></svg></button>
      <button class="tool"><svg viewBox="0 0 24 24"><rect x="6.500" y="2.500" width="11" height="19" rx="5.500" fill="none" stroke="#6d7285" stroke-width="1.400"/><path d="M12 6v3" stroke="#6d7285" stroke-width="1.400" stroke-linecap="round"/></svg></button>
      <button class="tool"><svg viewBox="0 0 24 24"><circle cx="12" cy="12" r="1.600" fill="#6d7285"/><path d="M4 4l5 5M9 5v4H5M20 4l-5 5M15 5v4h4M4 20l5-5M9 19v-4H5M20 20l-5-5M15 19v-4h4" fill="none" stroke="#6d7285" stroke-width="1.300"/></svg></button>
      <div class="zoom"><svg viewBox="0 0 20 20"><path d="M2 10h16" stroke="#6d7285" stroke-width="1.600"/></svg><span>35%</span><svg viewBox="0 0 20 20"><path d="M2 10h16M10 2v16" stroke="#6d7285" stroke-width="1.600"/></svg></div>
      <div class="history">
        <span class="hist"><svg viewBox="0 0 24 24"><path d="M7.500 3.500v5.500H13" fill="none" stroke="#6d7285" stroke-width="1.600"/><path d="M7.500 9A8 8 0 1 1 8 19.500" fill="none" stroke="#6d7285" stroke-width="1.600"/></svg></span>
        <span class="hist off"><svg viewBox="0 0 24 24"><path d="M16.500 3.500v5.500H11" fill="none" stroke="#8a8e9c" stroke-width="1.600"/><path d="M16.500 9A8 8 0 1 0 16 19.500" fill="none" stroke="#8a8e9c" stroke-width="1.600"/></svg></span>
      </div>
      <svg class="mascot" viewBox="0 0 46 46"><path d="M23 1C10 1 3 10 3 22c0 13 9 23 20 23 5 0 10-1 14 0l5 0-3-5c3-4 4-10 4-18C43 10 36 1 23 1z" fill="#fff" stroke="#3d4463" stroke-width="2"/><circle cx="23" cy="19" r="10.500" fill="none" stroke="#ef3e6d" stroke-width="3"/><circle cx="23" cy="19" r="4.500" fill="#3d4463"/><path d="M19 34a4 4 0 0 0 8 0z" fill="#3d4463"/></svg>
    </div>
  </main>
</div>
</body>
</html>
```

FILE: styles.css
```css
* { box-sizing: border-box; }
html, body { margin: 0; height: 100%; }
body {
  font-family: "Inter", "Noto Sans", "Liberation Sans", sans-serif;
  color: #3f4562;
  overflow: hidden;
}
.sprite { position: absolute; }
.app { display: flex; flex-direction: column; height: 1079px; }

/* top bar */
.topbar {
  flex: 0 0 75px;
  display: flex;
  align-items: center;
  padding: 0 19px 0 43px;
  background: #fff;
  border-bottom: 1px solid #e8e8ec;
}
.brand { display: flex; align-items: center; width: 730px; }
.back { width: 19px; height: 19px; }
.wa-logo { width: 47px; height: 47px; margin-left: 22px; fill: #25d366; }
.bot-name {
  margin: 0 0 0 21px;
  font-size: 25px;
  font-weight: 400;
  color: #4a5472;
  letter-spacing: -.2px;
  white-space: nowrap;
}
.steps { display: flex; align-items: center; margin-bottom: 3px; font-size: 16.600px; color: #3f4a66; }
.step.current {
  width: 75px; height: 45px; border-radius: 23px;
  display: flex; align-items: center; justify-content: center;
  background: #6366ff; color: #fff; font-weight: 500;
}
.chev { margin: 0 28px 0 33px; font-size: 14px; color: #4a5472; }
.chev.first { margin: 0 28px 0 13px; }
.actions { margin-left: auto; display: flex; align-items: center; gap: 10px; }
.actions button { height: 40px; border-radius: 7px; font: inherit; padding: 0; }
.btn-history {
  width: 42px; background: #fff; border: 1.500px solid #33405c;
  display: flex; align-items: center; justify-content: center;
}
.btn-history svg { width: 25px; height: 25px; }
.btn-test {
  width: 179px; background: #fff; border: 1.500px solid #dc3669; color: #dc3669;
  font-size: 18px !important; font-weight: 600 !important;
  display: flex; align-items: center; justify-content: center; gap: 11px;
}
.btn-test svg { width: 19px; height: 19px; fill: #dc3669; }
.btn-publish {
  width: 106px; background: #dc3669; border: 0; color: #fff;
  font-size: 18px !important; font-weight: 600 !important;
}

/* canvas */
.canvas { position: relative; flex: 1; background: #41466a; overflow: hidden; }
.grid {
  position: absolute; left: 0; right: 0; top: 18px; bottom: 44px;
  background-color: #474c6c;
  background-image:
    repeating-linear-gradient(90deg, rgba(255,255,255,.026) 0 1px, transparent 1px 17.350px),
    repeating-linear-gradient(180deg, rgba(255,255,255,.026) 0 1px, transparent 1px 17.350px);
}
.board { position: absolute; left: 0; top: -75px; width: 1919px; height: 1079px; filter: blur(.3px); }
.wires { position: absolute; left: 0; top: 0; }
.major { fill: none; stroke: rgba(255,255,255,.09); stroke-width: 1; }
.wire { fill: none; stroke: #4abbb2; stroke-width: 1.500; }
.arrow { marker-end: url(#arrowhead); }

/* nodes */
.node {
  position: absolute;
  background: #e5e4f1;
  border-radius: 1.500px;
  box-shadow: 0 5px 16px rgba(35, 38, 80, .28);
  display: flex;
  flex-direction: column;
}
.head {
  flex: 0 0 17.500px;
  display: flex; align-items: center;
  padding: 0 10px 0 6px;
  background: #fff;
  font-size: 6.200px;
  color: #474c6e;
}
.head b { font-weight: 700; margin-left: 5px; }
.bubble { width: 10.500px; height: 10.500px; }
.dots { width: 8px; height: 2.200px; margin-left: auto; }
.body {
  flex: 1;
  margin: 4px 4px 4.500px;
  padding: 5.500px 6.500px 4.500px;
  background: #fff;
  min-height: 0;
  display: flex;
  box-shadow: inset 0 0 4px rgba(90,90,150,.06);
}
.text {
  flex: 1;
  overflow: hidden;
  font-size: 5.350px;
  line-height: 7.850px;
  color: #5f6381;
  white-space: nowrap;
}
.text p { margin: 0 0 1.800px; }
.text b { color: #4b5072; font-weight: 700; }
.indent { padding-left: 4.500px; }
.indent .out { margin-left: -4.500px; }
.media { align-items: center; justify-content: center; }
.file { width: 14px; height: 20px; }

.port {
  position: absolute;
  right: .5px;
  width: 7.500px; height: 7.500px;
  border-radius: 50%;
  background:
    linear-gradient(#fff, #fff) center / 3.500px 1px no-repeat,
    linear-gradient(#fff, #fff) center / 1px 3.500px no-repeat,
    #44c9b8;
  margin-top: -3.750px;
}
.port.out-edge { right: -3.750px; }

/* list nodes */
.list-head {
  flex: 0 0 25px;
  display: flex; align-items: center;
  padding: 0 10px 0 8px;
  background: #fff;
  color: #4b5072;
}
.doc { width: 9px; height: 13px; }
.list-title { display: flex; flex-direction: column; margin-left: 8px; line-height: 8px; }
.list-title b { font-size: 6.300px; font-weight: 600; }
.list-title span { font-size: 5.500px; color: #888ca3; }
.rows { display: flex; flex-direction: column; gap: 1px; padding: 2px 3.500px 4px; }
.row {
  position: relative;
  height: 15.300px;
  display: flex; align-items: center;
  padding-left: 7px;
  background: #cc3873;
  color: #f9e3eb;
  font-size: 5.700px;
  font-weight: 600;
  white-space: nowrap;
}
.row .port { right: -3.750px; top: 50%; }
.row.none {
  height: 17.500px;
  margin-top: 0;
  background: #dcdcfb;
  border: .7px solid #a9a7ef;
  border-radius: 1.500px;
  color: #8a8cf0;
  font-weight: 400;
}
.help { width: 6px; height: 6px; margin-right: 4px; }

/* start & starter nodes */
.start, .starter {
  flex-direction: row; align-items: center;
  background: #fff;
  padding: 0 11px 0 8px;
}
.start { padding: 0 6px; }
.flag { width: 10px; height: 10px; flex: none; }
.start-text { display: flex; flex-direction: column; margin-left: 7px; line-height: 8px; font-size: 5.500px; color: #6f7390; }
.start .start-text { margin-left: 12px; }
.start-text b { font-size: 6px; font-weight: 600; color: #4b5072; }
.start-text span { white-space: nowrap; }
.emoji { width: 10px; height: 10px; flex: none; }
.starter-tag {
  position: absolute; left: 2px; top: -5px;
  padding: 0 2px; height: 7.500px; line-height: 7.500px;
  background: #d9d7f5;
  color: #5d5fa5;
  font-size: 5px;
}
.starter .port { right: 1px; }

/* floating controls */
.fab {
  position: absolute; left: 20px; top: 20px;
  width: 63px; height: 63px; padding: 16px;
  border: 0; border-radius: 50%;
  background: #4fcbbd;
  box-shadow: 0 6px 14px rgba(30,30,60,.3);
}
.fab svg { display: block; width: 100%; height: 100%; }
.toolbar {
  position: absolute; left: 1116px; top: 928px;
  display: flex; align-items: flex-start; gap: 11.400px;
}
.demo {
  width: 214px; height: 43px; margin-top: 1px; margin-right: -1px;
  border: 0; border-radius: 9px; background: #fff;
  box-shadow: 0 2px 3px rgba(20,20,50,.25);
  font: 400 18.500px "Liberation Sans", sans-serif; color: #111;
  padding: 0;
}
.tool, .zoom, .history {
  height: 41px; background: #fff; border: 0; border-radius: 5px;
  box-shadow: 0 1px 3px rgba(20,20,50,.3);
  display: flex; align-items: center; justify-content: center;
}
.tool { width: 44.500px; padding: 0; }
.tool svg { width: 24px; height: 24px; }
.zoom { width: 156px; justify-content: space-between; padding: 0 13px; font-size: 19px; color: #6d7285; }
.zoom svg { width: 18px; height: 18px; }
.history { width: 89px; overflow: hidden; }
.hist { flex: 1; height: 100%; display: flex; align-items: center; justify-content: center; }
.hist svg { width: 24px; height: 24px; }
.hist.off { background: #cdcfd4; }
.mascot { width: 46px; height: 46px; margin-left: 21px; margin-top: -1px; }
```
